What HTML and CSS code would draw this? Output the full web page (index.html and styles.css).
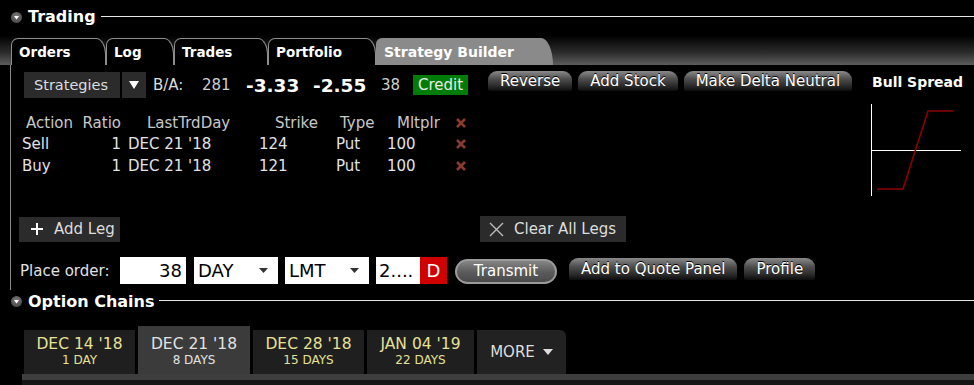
FILE: index.html
```html
<!DOCTYPE html>
<html lang="en">
<head>
    <meta charset="UTF-8">
    <title>Trading</title>
    <link rel="stylesheet" href="styles.css">
</head>
<body>
    <!-- Trading section -->
    <div class="sectionHead">
        <span class="toggle"><svg width="11" height="11" viewBox="0 0 11 11"><polygon points="3,4 8,4 5.5,7.5" fill="#fff"/></svg></span>
        <span class="sectionTitle">Trading</span>
        <span class="rule"></span>
    </div>
    <div class="tabBar">
        <div class="tab tabOrders">Orders</div>
        <div class="tab tabLog">Log</div>
        <div class="tab tabTrades">Trades</div>
        <div class="tab tabPortfolio">Portfolio</div>
        <div class="tab tabActive">Strategy Builder</div>
    </div>
    <div class="panel">
        <div class="mainCol">
            <div class="topRow">
                <div class="darkBtn strategiesBtn">Strategies</div>
                <div class="darkBtn arrowBtn"><svg width="12" height="10" viewBox="0 0 12 10"><polygon points="1,1 11,1 6,9" fill="#fff"/></svg></div>
                <span class="baLabel">B/A:</span>
                <span class="baSize">281</span>
                <span class="baPrice baBid">-3.33</span>
                <span class="baPrice baAsk">-2.55</span>
                <span class="baSize baSize2">38</span>
                <span class="creditTag">Credit</span>
                <div class="glossBtn reverseBtn">Reverse</div>
                <div class="glossBtn">Add Stock</div>
                <div class="glossBtn">Make Delta Neutral</div>
            </div>
            <div class="legTable">
                <div class="hd hdAction">Action</div>
                <div class="hd hdRatio">Ratio</div>
                <div class="hd hdDay">LastTrdDay</div>
                <div class="hd hdStrike">Strike</div>
                <div class="hd hdType">Type</div>
                <div class="hd hdMult">Mltplr</div>
                <div class="del"><svg width="12" height="12" viewBox="0 0 12 12"><path d="M2 2 L10 10 M10 2 L2 10" stroke="#8a3b31" stroke-width="2.6"/></svg></div>

                <div>Sell</div>
                <div class="cRatio">1</div>
                <div>DEC 21 '18</div>
                <div>124</div>
                <div>Put</div>
                <div>100</div>
                <div class="del"><svg width="12" height="12" viewBox="0 0 12 12"><path d="M2 2 L10 10 M10 2 L2 10" stroke="#8a3b31" stroke-width="2.6"/></svg></div>

                <div>Buy</div>
                <div class="cRatio">1</div>
                <div>DEC 21 '18</div>
                <div>121</div>
                <div>Put</div>
                <div>100</div>
                <div class="del"><svg width="12" height="12" viewBox="0 0 12 12"><path d="M2 2 L10 10 M10 2 L2 10" stroke="#8a3b31" stroke-width="2.6"/></svg></div>
            </div>
            <div class="legButtons">
                <div class="darkBtn addLegBtn">
                    <svg width="14" height="14" viewBox="0 0 14 14"><path d="M7 1 V13 M1 7 H13" stroke="#fff" stroke-width="2"/></svg>
                    <span>Add Leg</span>
                </div>
                <div class="darkBtn clearBtn">
                    <svg width="15" height="15" viewBox="0 0 15 15"><path d="M1 1 L14 14 M14 1 L1 14" stroke="#bdbdbd" stroke-width="1.4"/></svg>
                    <span>Clear All Legs</span>
                </div>
            </div>
            <div class="orderRow">
                <span class="orderLabel">Place order:</span>
                <div class="field qtyField">38</div>
                <div class="field selField">DAY<svg width="9" height="6" viewBox="0 0 9 6"><polygon points="0,0 9,0 4.5,5" fill="#333"/></svg></div>
                <div class="field selField">LMT<svg width="9" height="6" viewBox="0 0 9 6"><polygon points="0,0 9,0 4.5,5" fill="#333"/></svg></div>
                <div class="field priceField">2....</div>
                <div class="dFlag">D</div>
                <div class="transmitBtn">Transmit</div>
                <div class="glossBtn quoteBtn">Add to Quote Panel</div>
                <div class="glossBtn quoteBtn">Profile</div>
            </div>
        </div>
        <div class="sideCol">
            <p class="spreadName">Bull Spread</p>
            <svg class="payoff" width="112" height="100" viewBox="0 0 112 100">
                <line x1="9.5" y1="4" x2="9.5" y2="96" stroke="#fff" stroke-width="1"/>
                <line x1="9" y1="50.5" x2="99" y2="50.5" stroke="#fff" stroke-width="1"/>
                <polyline points="15,89 41,89 66,11 91,11" fill="none" stroke="#8e0000" stroke-width="1.6"/>
            </svg>
        </div>
    </div>

    <!-- Option chains section -->
    <div class="sectionHead chainsHead">
        <span class="toggle"><svg width="11" height="11" viewBox="0 0 11 11"><polygon points="3,4 8,4 5.5,7.5" fill="#fff"/></svg></span>
        <span class="sectionTitle">Option Chains</span>
        <span class="rule"></span>
    </div>
    <div class="expiryTabs">
        <div class="expTab"><span class="expDate">DEC 14 '18</span><span class="expDays">1 DAY</span></div>
        <div class="expTab expActive"><span class="expDate">DEC 21 '18</span><span class="expDays">8 DAYS</span></div>
        <div class="expTab"><span class="expDate">DEC 28 '18</span><span class="expDays">15 DAYS</span></div>
        <div class="expTab expJan"><span class="expDate">JAN 04 '19</span><span class="expDays">22 DAYS</span></div>
        <div class="expTab moreTab">MORE<svg width="10" height="7" viewBox="0 0 10 7"><polygon points="0,0 10,0 5,6" fill="#ddd"/></svg></div>
    </div>
    <div class="expiryBar"></div>
    <div class="expiryBase"></div>
</body>
</html>
```

FILE: styles.css
```css
*{
    margin: 0;
    padding: 0;
    box-sizing: border-box;
}
body{
    background-color: #000;
    color: #ddd;
    font-family: "DejaVu Sans", sans-serif;
    font-size: 15px;
    width: 974px;
    height: 385px;
    overflow: hidden;
}

/* section headers */
.sectionHead{
    height: 28px;
    padding-top: 6px;
    display: flex;
    align-items: center;
}
.chainsHead{
    height: 23px;
    padding-top: 0;
}
.toggle{
    width: 11px;
    height: 11px;
    margin-left: 11px;
    border-radius: 50%;
    background: radial-gradient(circle at 50% 35%, #7a7a7a, #3a3a3a);
    display: flex;
}
.sectionTitle{
    margin-left: 6px;
    font-weight: bold;
    font-size: 16px;
    line-height: 22px;
    color: #fff;
}
.rule{
    flex: 1;
    height: 1px;
    margin-left: 5px;
    margin-bottom: 2px;
    background-color: #e6e6e6;
}

/* top tabs */
.tabBar{
    height: 37px;
    padding-left: 11px;
    display: flex;
    align-items: flex-end;
    background: linear-gradient(#000 20%, #2a2a2a 65%, #5c5c5c);
}
.tab{
    height: 27px;
    padding: 4px 0 0 7px;
    background-color: #000;
    border: 1px solid #8d8d8d;
    border-bottom: none;
    border-radius: 7px 10px 0 0 / 7px 16px 0 0;
    color: #fff;
    font-weight: bold;
    font-size: 13.5px;
    line-height: 18px;
}
.tabOrders{ width: 95px; }
.tabLog{ width: 68px; }
.tabTrades{ width: 94px; }
.tabPortfolio{ width: 108px; }
.tabActive{
    width: 177px;
    border: none;
    background-color: #8a8a8a;
    border-radius: 6px 12px 0 0 / 6px 27px 0 0;
    padding-left: 8px;
    padding-top: 5px;
    font-size: 14px;
}

/* strategy panel */
.panel{
    margin-left: 10px;
    height: 225px;
    border-left: 1px solid #8a8a8a;
    display: flex;
}
.mainCol{
    flex: 1;
    padding-top: 7px;
}
.topRow{
    height: 26px;
    padding-left: 13px;
    display: flex;
    align-items: center;
}
.darkBtn{
    height: 26px;
    background-color: #2b2b2b;
    color: #ddd;
    display: flex;
    align-items: center;
}
.strategiesBtn{
    width: 96px;
    padding-left: 10px;
    font-size: 14.5px;
}
.arrowBtn{
    width: 24px;
    margin-left: 2px;
    justify-content: center;
}
.baLabel{
    width: 49px;
    margin-left: 7px;
}
.baSize{
    width: 44px;
    color: #cfcfcf;
}
.baPrice{
    font-weight: bold;
    font-size: 18.5px;
    color: #fff;
}
.baBid{ width: 67px; }
.baAsk{ width: 68px; }
.baSize2{ width: 32px; }
.creditTag{
    width: 55px;
    height: 20px;
    line-height: 20px;
    text-align: center;
    background-color: #007d06;
    color: #eaeaea;
}
.glossBtn{
    height: 20px;
    line-height: 20px;
    padding: 0 12px;
    margin-left: 6px;
    border-radius: 9px 9px 2px 2px;
    background: linear-gradient(#8a8a8a 0%, #4d4d4d 40%, #2a2a2a 75%, #0c0c0c 100%);
    color: #fff;
    text-shadow: 0 -1px 0 #000;
    align-self: flex-start;
    margin-top: -1px;
}
.reverseBtn{
    margin-left: 20px;
}

/* legs table */
.legTable{
    margin: 15px 0 0 11px;
    display: grid;
    grid-template-columns: 53px 53px 131px 77px 51px 68px 20px;
    grid-template-rows: 20px 21px 23px;
    align-items: center;
    color: #e2e2e2;
    white-space: nowrap;
}
.hd{
    color: #c8c8c8;
}
.hdAction{ padding-left: 4px; }
.hdRatio{ text-align: right; padding-right: 7px; }
.cRatio{ text-align: right; padding-right: 7px; }
.hdDay{ padding-left: 19px; }
.hdStrike{ text-align: right; padding-right: 18px; }
.hdType{ padding-left: 4px; }
.hdMult{ padding-left: 10px; }
.del{
    display: flex;
}

/* leg buttons */
.legButtons{
    margin-top: 39px;
    padding-left: 8px;
    display: flex;
    align-items: center;
}
.addLegBtn{
    width: 101px;
    height: 25px;
    padding-left: 11px;
}
.addLegBtn span{
    margin-left: 10px;
}
.clearBtn{
    width: 146px;
    margin-left: 360px;
    padding-left: 9px;
}
.clearBtn span{
    margin-left: 10px;
}

/* place order row */
.orderRow{
    margin-top: 15px;
    height: 27px;
    padding-left: 9px;
    display: flex;
    align-items: center;
}
.orderLabel{
    width: 100px;
    color: #e0e0e0;
}
.field{
    height: 27px;
    background-color: #fff;
    color: #000;
    font-size: 18px;
    line-height: 27px;
    margin-right: 7px;
}
.qtyField{
    width: 66px;
    text-align: right;
    padding-right: 4px;
    margin-right: 8px;
}
.selField{
    width: 84px;
    padding-left: 4px;
    padding-right: 10px;
    display: flex;
    align-items: center;
    justify-content: space-between;
}
.priceField{
    width: 44px;
    padding-left: 3px;
    margin-right: 0;
}
.dFlag{
    width: 27px;
    height: 27px;
    line-height: 27px;
    text-align: center;
    background-color: #d10000;
    color: #fff;
    font-size: 18px;
}
.transmitBtn{
    width: 102px;
    height: 25px;
    margin-left: 8px;
    border: 2px solid #9a9a9a;
    border-radius: 13px;
    background: linear-gradient(#858585, #5a5a5a 55%, #4a4a4a);
    color: #fff;
    text-align: center;
    line-height: 21px;
    margin-top: 1px;
}
.quoteBtn{
    margin-left: 12px;
    height: 22px;
    line-height: 22px;
    align-self: auto;
    margin-top: -3px;
}
.quoteBtn + .quoteBtn{
    margin-left: 7px;
}

/* spread picture */
.sideCol{
    width: 112px;
}
.spreadName{
    margin-top: 8px;
    padding-left: 10px;
    line-height: 18px;
    font-weight: bold;
    font-size: 14px;
    color: #fff;
}
.payoff{
    display: block;
    margin-top: 9px;
}

/* expiry tabs */
.expiryTabs{
    height: 61px;
    padding-top: 13px;
    padding-left: 24px;
    display: flex;
    align-items: flex-end;
    gap: 3px;
}
.expTab{
    width: 111px;
    height: 44px;
    padding-top: 6px;
    background-color: #1f1f1f;
    display: flex;
    flex-direction: column;
    align-items: center;
    color: #e6e196;
}
.expDate{
    font-size: 15.5px;
    line-height: 17px;
}
.expDays{
    font-size: 12px;
    line-height: 14px;
}
.expActive{
    width: 112px;
    height: 48px;
    padding-top: 10px;
    background-color: #3b3b3b;
    color: #e2e2e2;
}
.expJan{
    width: 107px;
}
.moreTab{
    width: 89px;
    padding-top: 0;
    flex-direction: row;
    justify-content: center;
    gap: 8px;
    border-top-right-radius: 6px;
    font-size: 15px;
    color: #dedede;
    background-color: #222;
}
.expiryBar{
    margin-left: 22px;
    height: 6px;
    background-color: #3e3e3e;
}
.expiryBase{
    margin-left: 22px;
    height: 10px;
    background-color: #161616;
}
```
